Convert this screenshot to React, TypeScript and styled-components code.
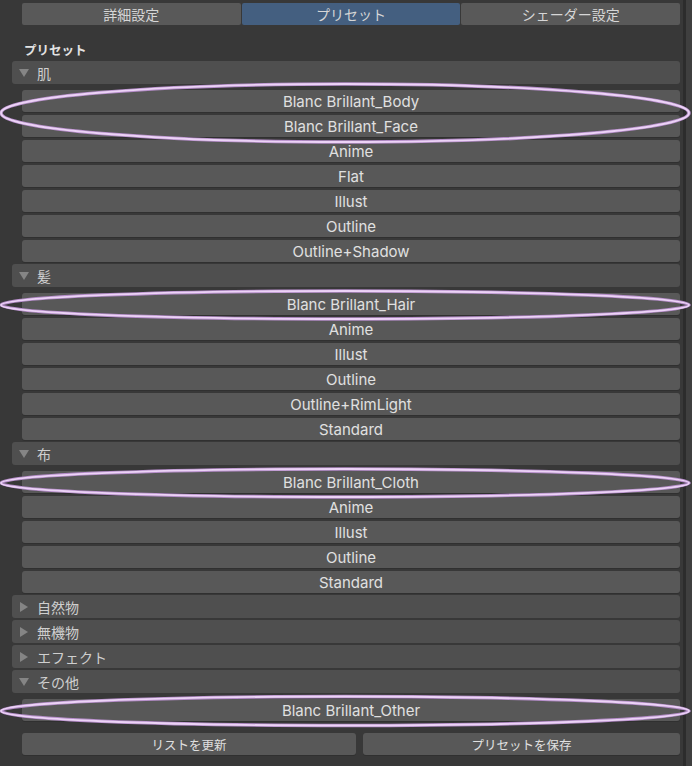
import React from 'react';
import styled, { createGlobalStyle } from 'styled-components';

const GlobalStyle = createGlobalStyle`
    html, body {
        margin: 0;
        padding: 0;
        background: #383838;
    }
    body {
        font-family: Inter, "Noto Sans CJK JP", sans-serif;
        color: #dcdcdc;
    }
`;

const Page = styled.div`
    position: relative;
    width: 692px;
    height: 766px;
    display: flex;
    background: #383838;
    overflow: hidden;
`;

const Panel = styled.div`
    width: 683px;
    display: flex;
    flex-direction: column;
    padding: 3px 3px 0 12px;
    box-sizing: border-box;
`;

const ScrollTrack = styled.div`
    width: 9px;
    border-left: 3px solid #2c2c2c;
    background: #3f3f3f;
    box-sizing: border-box;
`;

const Tabs = styled.div`
    display: flex;
    gap: 1px;
    margin-left: 10px;
`;

const Tab = styled.div<{ $active?: boolean }>`
    flex: 1;
    height: 22px;
    display: flex;
    align-items: center;
    justify-content: center;
    border-radius: 2px;
    background: ${(p) => (p.$active ? '#445f80' : '#595959')};
    color: #d6d6d6;
    font-size: 14px;
`;

const Title = styled.div`
    margin: 14px 0 0 12px;
    height: 20px;
    display: flex;
    align-items: center;
    font-size: 12.5px;
    font-weight: 700;
    color: #e2e2e2;
`;

const Header = styled.div`
    height: 23px;
    margin-top: 2px;
    display: flex;
    align-items: center;
    gap: 8px;
    padding-left: 7px;
    border-radius: 3px;
    background: #4f4f4f;
    color: #cfcfcf;
    font-size: 14px;
`;

const Arrow = styled.span<{ $open?: boolean }>`
    width: 0;
    height: 0;
    ${(p) =>
        p.$open
            ? `border-left: 5px solid transparent;
               border-right: 5px solid transparent;
               border-top: 8px solid #858585;`
            : `border-top: 5px solid transparent;
               border-bottom: 5px solid transparent;
               border-left: 8px solid #858585;
               margin-left: 1px;
               margin-right: 1px;`}
`;

const Items = styled.div`
    display: flex;
    flex-direction: column;
    gap: 3px;
    padding: 6px 0 0 10px;
`;

const Item = styled.div`
    height: 22px;
    display: flex;
    align-items: center;
    justify-content: center;
    border-radius: 3px;
    background: #585858;
    box-shadow: 0 1px 0 #303030;
    color: #e0e0e0;
    font-size: 15px;
`;

const Footer = styled.div`
    display: flex;
    gap: 7px;
    margin: 12px 0 0 10px;
`;

const FooterButton = styled(Item)<{ $grow: number }>`
    flex: ${(p) => p.$grow};
    font-size: 12.5px;
`;

const Marks = styled.svg`
    position: absolute;
    left: 0;
    top: 0;
    pointer-events: none;
`;

type Section = { name: string; open: boolean; items: string[] };

const sections: Section[] = [
    {
        name: '肌',
        open: true,
        items: ['Blanc Brillant_Body', 'Blanc Brillant_Face', 'Anime', 'Flat', 'Illust', 'Outline', 'Outline+Shadow'],
    },
    {
        name: '髪',
        open: true,
        items: ['Blanc Brillant_Hair', 'Anime', 'Illust', 'Outline', 'Outline+RimLight', 'Standard'],
    },
    { name: '布', open: true, items: ['Blanc Brillant_Cloth', 'Anime', 'Illust', 'Outline', 'Standard'] },
    { name: '自然物', open: false, items: [] },
    { name: '無機物', open: false, items: [] },
    { name: 'エフェクト', open: false, items: [] },
    { name: 'その他', open: true, items: ['Blanc Brillant_Other'] },
];

const rings = [
    { cy: 113, rx: 344, ry: 29 },
    { cy: 305, rx: 344, ry: 14 },
    { cy: 483, rx: 344, ry: 14 },
    { cy: 711, rx: 344, ry: 14.5 },
];

const App = () => (
    <Page>
        <GlobalStyle />
        <Panel>
            <Tabs>
                <Tab>詳細設定</Tab>
                <Tab $active>プリセット</Tab>
                <Tab>シェーダー設定</Tab>
            </Tabs>
            <Title>プリセット</Title>
            {sections.map((s) => (
                <React.Fragment key={s.name}>
                    <Header>
                        <Arrow $open={s.open} />
                        <span>{s.name}</span>
                    </Header>
                    {s.items.length > 0 && (
                        <Items>
                            {s.items.map((it, i) => (
                                <Item key={i}>{it}</Item>
                            ))}
                        </Items>
                    )}
                </React.Fragment>
            ))}
            <Footer>
                <FooterButton $grow={334}>リストを更新</FooterButton>
                <FooterButton $grow={317}>プリセットを保存</FooterButton>
            </Footer>
        </Panel>
        <ScrollTrack />

        {/* annotation rings drawn over the list */}
        <Marks width={692} height={766}>
            {rings.map((r, i) => (
                <g key={i}>
                    <ellipse cx={345} cy={r.cy} rx={r.rx} ry={r.ry} fill="none" stroke="#b58dc9" strokeWidth={3.5} />
                    <ellipse cx={345} cy={r.cy} rx={r.rx} ry={r.ry} fill="none" stroke="#ecd3f6" strokeWidth={1.8} />
                </g>
            ))}
        </Marks>
    </Page>
);

export default App;
